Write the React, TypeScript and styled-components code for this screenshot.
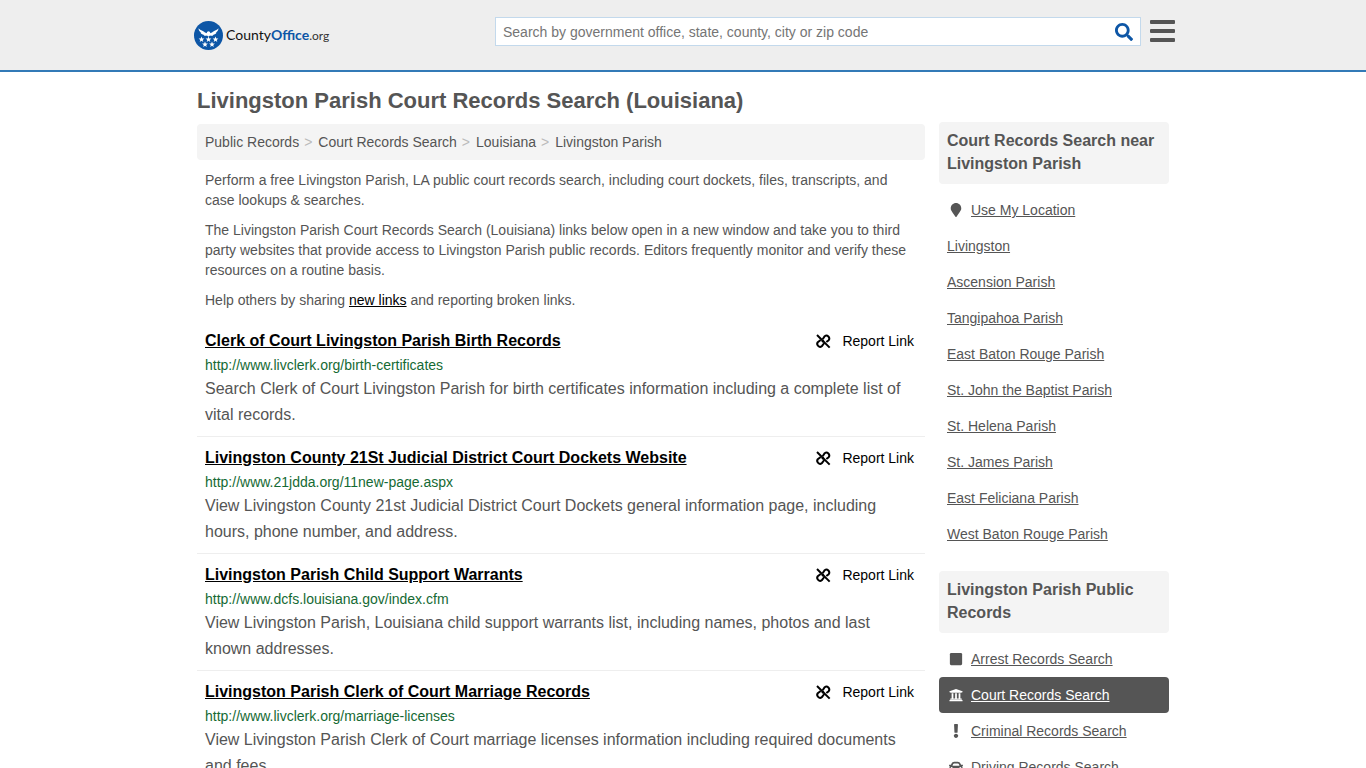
import React from "react";
import styled, { createGlobalStyle } from "styled-components";
import { FaMapMarker, FaSquare, FaUniversity, FaExclamation, FaCar, FaSearch } from "react-icons/fa";

const GlobalStyle = createGlobalStyle`
  * { box-sizing: border-box; }
  body {
    margin: 0;
    background: #fff;
    color: #555;
    font: 14px/20px "Liberation Sans", Arial, sans-serif;
  }
  h1, h2, h3, p, ul, ol { margin: 0; padding: 0; }
  ul, ol { list-style: none; }
`;

const Header = styled.header`
  background: #eee;
  border-bottom: 2px solid #337ab7;
`;

const HeaderInner = styled.div`
  display: flex;
  align-items: center;
  max-width: 984px;
  height: 70px;
  margin: 0 auto;
  padding-left: 3px;
`;

const Logo = styled.a`
  display: flex;
  align-items: center;
  gap: 3px;
  width: 301px;
  color: #111;
  font: 14px/20px Lato, "Liberation Sans", sans-serif;
  text-decoration: none;
  svg { flex: none; }
`;

const LogoStrong = styled.b`
  color: #0d56a6;
`;

const LogoSuffix = styled.span`
  color: #333;
  font-size: 12px;
`;

const SearchForm = styled.form`
  display: flex;
  flex: 1;
  height: 29px;
  margin-bottom: 8px;
  border: 1px solid #c3d9ec;
  background: #fff;
`;

const SearchInput = styled.input`
  flex: 1;
  min-width: 0;
  padding: 2px 7px 0;
  border: 0;
  outline: 0;
  background: transparent;
  color: #555;
  font: inherit;
  &::placeholder { color: #757575; opacity: 1; }
`;

const IconButton = styled.button`
  display: flex;
  align-items: center;
  justify-content: center;
  padding: 0;
  border: 0;
  background: transparent;
  cursor: pointer;
`;

const SearchButton = styled(IconButton)`
  width: 32px;
  padding-top: 2px;
  color: #0d56a6;
`;

const MenuButton = styled(IconButton)`
  flex-direction: column;
  align-items: flex-end;
  gap: 5px;
  width: 34px;
  height: 30px;
  margin-bottom: 8px;
`;

const MenuBar = styled.span`
  width: 25px;
  height: 4px;
  border-radius: 1px;
  background: #555;
`;

const Page = styled.div`
  display: grid;
  grid-template-columns: minmax(0, 1fr) 230px;
  column-gap: 14px;
  max-width: 972px;
  margin: 0 auto;
  padding: 15px 0 24px;
`;

const Title = styled.h1`
  grid-column: 1 / -1;
  font-size: 22px;
  line-height: 28px;
`;

const Main = styled.main`
  padding-top: 9px;
`;

const Crumbs = styled.ol`
  display: flex;
  padding: 8px;
  border-radius: 4px;
  background: #f4f4f4;
  li + li::before {
    content: ">";
    padding: 0 6px 0 5px;
    color: #bbb;
  }
`;

const CrumbLink = styled.a`
  color: #555;
  text-decoration: none;
`;

const Intro = styled.div`
  display: grid;
  gap: 10px;
  padding: 10px 8px;
`;

const NewLink = styled.a`
  color: #000;
`;

const Result = styled.li`
  padding: 9px 8px 8px;
  border-bottom: 1px solid #eee;
`;

const ResultHead = styled.div`
  display: flex;
  justify-content: space-between;
  padding-right: 3px;
`;

const ResultTitle = styled.h3`
  font-size: 16px;
  line-height: 24px;
  a { color: #000; }
`;

const ReportButton = styled.button`
  display: flex;
  align-items: center;
  gap: 11px;
  padding: 0;
  border: 0;
  background: transparent;
  color: #000;
  font: inherit;
  cursor: pointer;
`;

const ResultUrl = styled.p`
  padding: 2px 0 1px;
  color: #156a34;
`;

const ResultText = styled.p`
  font-size: 16px;
  line-height: 26px;
`;

const Sidebar = styled.aside`
  padding-top: 7px;
`;

const SideHeading = styled.h2`
  margin-bottom: 8px;
  padding: 7px 8px 9px;
  border-radius: 4px;
  background: #f4f4f4;
  font-size: 16px;
  line-height: 23px;
`;

const SideList = styled.ul`
  margin-bottom: 19px;
`;

const SideLink = styled.a<{ $active?: boolean }>`
  display: flex;
  align-items: center;
  gap: 6px;
  padding: 8px;
  border-radius: 4px;
  background: ${(p) => (p.$active ? "#555" : "transparent")};
  color: ${(p) => (p.$active ? "#fff" : "#555")};
`;

const IconSlot = styled.span`
  display: flex;
  justify-content: center;
  width: 18px;
`;

const star = "M0-2.900 .8-.9 2.900-.9 1.200.4 1.800 2.500 0 1.300-1.800 2.500-1.200.4-2.900-.9-.8-.9Z";
const stars = [[7.5, 18.5], [14.5, 18.5], [21.5, 18.5], [11, 23.5], [18, 23.5]];

function Emblem() {
  return (
    <svg width="29" height="29" viewBox="0 0 29 29" aria-hidden="true">
      <circle cx="14.5" cy="14.5" r="14.5" fill="#0d56a6" />
      <g fill="#fff">
        <path d="M4.5 7.2c1.2 1.5 3 2 4.700 3.100 1.300.8 2.300 1.600 3.300 1.900l.8-1.400 1.200-.6 1.200.6.800 1.400c1-.3 2-1.100 3.300-1.900 1.700-1.100 3.500-1.600 4.700-3.100-.1 2.300-1.300 3.700-3 4.700.3 0 .7 0 1-.1-1 1.400-2.300 2-3.900 2.200l.7.500c-1.200.6-2.300.4-3.300-.1l-1.500 1.300-1.500-1.300c-1 .5-2.100.7-3.300.1l.7-.5c-1.600-.2-2.900-.8-3.900-2.200.3.1.7.1 1 .1-1.700-1-2.900-2.400-3-4.700Z" />
        {stars.map(([x, y]) => (
          <path key={`${x}-${y}`} d={star} transform={`translate(${x} ${y})`} />
        ))}
      </g>
    </svg>
  );
}

function BrokenLinkIcon() {
  return (
    <svg
      width="16"
      height="16"
      viewBox="0 0 24 24"
      fill="none"
      stroke="currentColor"
      strokeWidth="3"
      aria-hidden="true"
    >
      <path d="M3 3 22 22" />
      <path d="M11.500 9.500 14.500 4.800a4.300 4.300 0 0 1 6 6L17 13.500" />
      <path d="M8.500 10.500 4.200 13.800a4.300 4.300 0 0 0 6 6L14 15" />
      <path d="M10.500 13.500 13 11" />
    </svg>
  );
}

const crumbs = ["Public Records", "Court Records Search", "Louisiana", "Livingston Parish"];

const results = [
  {
    title: "Clerk of Court Livingston Parish Birth Records",
    url: "http://www.livclerk.org/birth-certificates",
    text: "Search Clerk of Court Livingston Parish for birth certificates information including a complete list of vital records.",
  },
  {
    title: "Livingston County 21St Judicial District Court Dockets Website",
    url: "http://www.21jdda.org/11new-page.aspx",
    text: "View Livingston County 21st Judicial District Court Dockets general information page, including hours, phone number, and address.",
  },
  {
    title: "Livingston Parish Child Support Warrants",
    url: "http://www.dcfs.louisiana.gov/index.cfm",
    text: "View Livingston Parish, Louisiana child support warrants list, including names, photos and last known addresses.",
  },
  {
    title: "Livingston Parish Clerk of Court Marriage Records",
    url: "http://www.livclerk.org/marriage-licenses",
    text: "View Livingston Parish Clerk of Court marriage licenses information including required documents and fees.",
  },
];

const nearby = [
  "Livingston",
  "Ascension Parish",
  "Tangipahoa Parish",
  "East Baton Rouge Parish",
  "St. John the Baptist Parish",
  "St. Helena Parish",
  "St. James Parish",
  "East Feliciana Parish",
  "West Baton Rouge Parish",
];

const records = [
  { label: "Arrest Records Search", Icon: FaSquare },
  { label: "Court Records Search", Icon: FaUniversity, active: true },
  { label: "Criminal Records Search", Icon: FaExclamation },
  { label: "Driving Records Search", Icon: FaCar },
];

export default function App() {
  return (
    <>
      <GlobalStyle />
      <Header>
        <HeaderInner>
          <Logo href="#">
            <Emblem />
            <span>
              County<LogoStrong>Office</LogoStrong>
              <LogoSuffix>.org</LogoSuffix>
            </span>
          </Logo>
          <SearchForm role="search">
            <SearchInput
              type="text"
              aria-label="Search"
              placeholder="Search by government office, state, county, city or zip code"
            />
            <SearchButton type="submit" aria-label="Submit search">
              <FaSearch size={18} />
            </SearchButton>
          </SearchForm>
          <MenuButton type="button" aria-label="Menu">
            <MenuBar />
            <MenuBar />
            <MenuBar />
          </MenuButton>
        </HeaderInner>
      </Header>
      <Page>
        <Title>Livingston Parish Court Records Search (Louisiana)</Title>
        <Main>
          <nav aria-label="Breadcrumb">
            <Crumbs>
              {crumbs.map((c) => (
                <li key={c}>
                  <CrumbLink href="#">{c}</CrumbLink>
                </li>
              ))}
            </Crumbs>
          </nav>
          <Intro>
            <p>
              Perform a free Livingston Parish, LA public court records search, including court dockets, files,
              transcripts, and case lookups &amp; searches.
            </p>
            <p>
              The Livingston Parish Court Records Search (Louisiana) links below open in a new window and take you to
              third party websites that provide access to Livingston Parish public records. Editors frequently monitor
              and verify these resources on a routine basis.
            </p>
            <p>
              Help others by sharing <NewLink href="#">new links</NewLink> and reporting broken links.
            </p>
          </Intro>
          <ul>
            {results.map((r) => (
              <Result key={r.title}>
                <ResultHead>
                  <ResultTitle>
                    <a href="#">{r.title}</a>
                  </ResultTitle>
                  <ReportButton type="button">
                    <BrokenLinkIcon />
                    Report Link
                  </ReportButton>
                </ResultHead>
                <ResultUrl>{r.url}</ResultUrl>
                <ResultText>{r.text}</ResultText>
              </Result>
            ))}
          </ul>
        </Main>
        <Sidebar>
          <SideHeading>Court Records Search near Livingston Parish</SideHeading>
          <SideList>
            <li>
              <SideLink href="#">
                <IconSlot>
                  <FaMapMarker size={14} />
                </IconSlot>
                Use My Location
              </SideLink>
            </li>
            {nearby.map((n) => (
              <li key={n}>
                <SideLink href="#">{n}</SideLink>
              </li>
            ))}
          </SideList>
          <SideHeading>Livingston Parish Public Records</SideHeading>
          <SideList>
            {records.map(({ label, Icon, active }) => (
              <li key={label}>
                <SideLink href="#" $active={active}>
                  <IconSlot>
                    <Icon size={14} />
                  </IconSlot>
                  {label}
                </SideLink>
              </li>
            ))}
          </SideList>
        </Sidebar>
      </Page>
    </>
  );
}
